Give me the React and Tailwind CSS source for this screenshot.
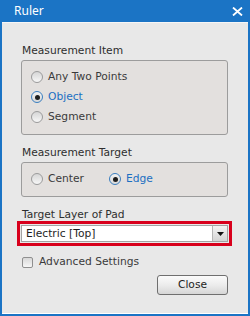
export default function App() {
  const font = { fontFamily: '"DejaVu Sans", Verdana, sans-serif' };

  function Radio({ checked }) {
    return (
      <span
        className={
          'w-[12px] h-[12px] rounded-full shrink-0 flex items-center justify-center border ' +
          (checked
            ? 'border-[#3b7fc0] bg-gradient-to-b from-[#f2f2f2] to-[#d9d9d9]'
            : 'border-[#9b9b9b] bg-gradient-to-b from-[#d6d6d6] to-[#f7f7f7]')
        }
      >
        {checked && <span className="w-[5px] h-[5px] rounded-full bg-[#1e1e1e]" />}
      </span>
    );
  }

  function Option({ label, checked, className = '' }) {
    return (
      <div className={'h-[20px] flex items-center gap-[5px] ' + className}>
        <Radio checked={checked} />
        <span className={checked ? 'text-[#1b6fc2]' : 'text-[#3a3a3a]'}>{label}</span>
      </div>
    );
  }

  return (
    <div
      className="w-[250px] h-[316px] bg-[#1b74c5] flex flex-col px-[2px] pb-[2px] text-[10.7px] leading-[14px]"
      style={font}
    >
      {/* title bar */}
      <div className="h-[22px] shrink-0 flex items-center justify-between pl-[12px] pr-[5px] text-white">
        <span className="text-[12px]" style={{ fontFamily: '"Noto Sans", sans-serif' }}>Ruler</span>
        <svg width="11" height="9" viewBox="0 0 11 9">
          <path d="M1 0.5 L10 8.5 M10 0.5 L1 8.5" stroke="white" strokeWidth="1.8" />
        </svg>
      </div>

      <div className="flex-1 flex flex-col bg-[#e8e8e8] border-t border-t-[#f6f6f6] border-b border-b-white pl-[19px] pr-[20px] pt-[21px]">
        <div className="h-[14px] pl-[1px] text-[#2e2e2e]">Measurement Item</div>
        <div className="mt-[2px] rounded-[3px] border border-[#9c9c9c] bg-[#e3e0de] pt-[6px] pb-[7px] pl-[9px]">
          <Option label="Any Two Points" />
          <Option label="Object" checked />
          <Option label="Segment" />
        </div>

        <div className="mt-[11px] h-[14px] pl-[1px] text-[#2e2e2e]">Measurement Target</div>
        <div className="mt-[2px] rounded-[3px] border border-[#9c9c9c] bg-[#e3e0de] pt-[6px] pb-[7px] pl-[9px] flex">
          <Option label="Center" className="w-[78px]" />
          <Option label="Edge" checked />
        </div>

        <div className="mt-[11px] h-[14px] pl-[1px] text-[#2e2e2e]">Target Layer of Pad</div>
        <div className="mt-[3px] h-[17px] flex bg-white border border-[#a3a3a3] outline-[3px] outline-solid outline-[#d8001c] outline-offset-[1px]">
          <div className="flex-1 flex items-center pl-[4px] text-[#1e1e1e]">Electric [Top]</div>
          <div className="w-[15px] border-l border-[#b5b5b5] bg-gradient-to-b from-[#f4f4f4] to-[#d4d4d4] flex items-center justify-center">
            <svg width="7" height="4" viewBox="0 0 7 4">
              <path d="M0 0 H7 L3.5 4 Z" fill="#111" />
            </svg>
          </div>
        </div>

        <div className="mt-[13px] h-[14px] flex items-center gap-[6px] pl-[1px]">
          <span className="w-[11px] h-[11px] rounded-[2px] border border-[#8f8f8f] bg-gradient-to-b from-[#d8d8d8] to-[#f6f6f6]" />
          <span className="text-[#3a3a3a]">Advanced Settings</span>
        </div>

        <button className="mt-[6px] self-end w-[71px] h-[20px] rounded-[3px] border border-[#6f6f6f] bg-gradient-to-b from-[#fbfbfb] via-[#ececec] to-[#d6d6d6] text-[#1e1e1e] flex items-center justify-center">
          Close
        </button>
      </div>
    </div>
  );
}
